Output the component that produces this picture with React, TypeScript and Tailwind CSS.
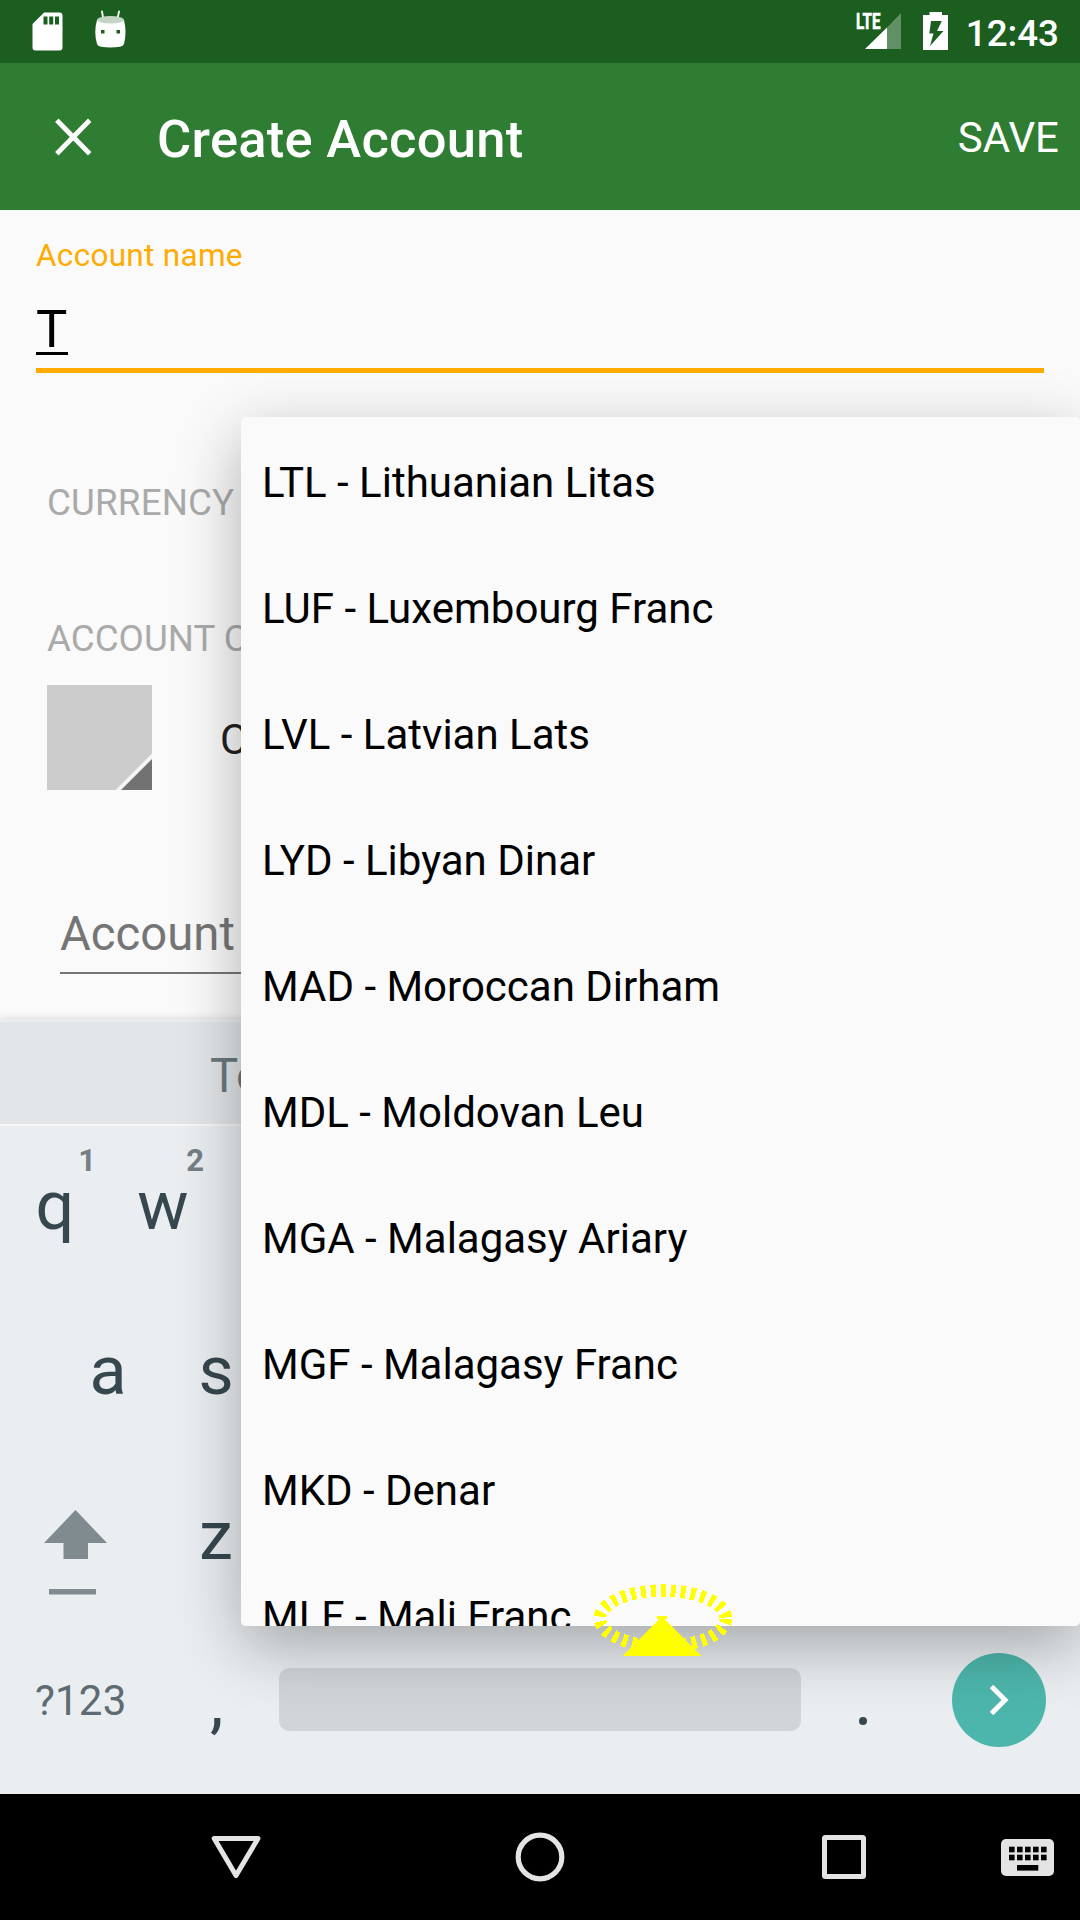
import React from "react";

const currencies = [
  "LTL - Lithuanian Litas",
  "LUF - Luxembourg Franc",
  "LVL - Latvian Lats",
  "LYD - Libyan Dinar",
  "MAD - Moroccan Dirham",
  "MDL - Moldovan Leu",
  "MGA - Malagasy Ariary",
  "MGF - Malagasy Franc",
  "MKD - Denar",
  "MLF - Mali Franc",
];

function StatusBar() {
  return (
    <div className="flex h-[63px] shrink-0 items-start bg-[#1b5e20] text-white">
      <svg className="ml-8 mt-3 h-[39px] w-[31px]" viewBox="0 0 31 39">
        <path
          fillRule="evenodd"
          fill="#fff"
          d="M12 0.500H27.500Q30.500 0.500 30.500 3.500V35.500Q30.500 38.500 27.500 38.500H3.500Q0.500 38.500 0.500 35.500V12ZM11.500 4.500V12.500H15.500V4.500ZM17.200 4.500V12.500H21.200V4.500ZM23 4.500V12.500H27V4.500Z"
        />
      </svg>
      <svg className="ml-8 mt-[10px] h-[39px] w-[31px]" viewBox="0 0 31 39">
        <path d="M7 1.500L8.300 9M24 1.500L22.500 9" stroke="#fff" strokeWidth="1.800" strokeLinecap="round" />
        <path
          fill="#fff"
          fillRule="evenodd"
          d="M2 10Q15.500 16 29 10Q32 22 29 34Q28.500 36 25 36.800Q15.500 38.200 6 36.800Q2.700 36 2 34Q-1.500 22 2 10ZM6 20V23.500H9.500V20ZM21.500 20V23.500H25V20Z"
        />
        <ellipse cx="15.500" cy="9.800" rx="13.500" ry="3.700" fill="#c3d5c4" />
      </svg>
      <svg className="ml-auto mt-3 h-[38px] w-[46px]" viewBox="0 0 46 38">
        <path d="M45 1V37H31V15.500Z" fill="#619064" />
        <path d="M31 15.500V37H9Z" fill="#fff" />
        <text
          x="0"
          y="17"
          textLength="24.500"
          lengthAdjust="spacingAndGlyphs"
          fill="#fff"
          stroke="#fff"
          strokeWidth="0.600"
          className="font-['Roboto',sans-serif] text-[22px] font-bold"
        >
          LTE
        </text>
      </svg>
      <svg className="ml-[21px] mt-3 h-[38px] w-[25px]" viewBox="0 0 25 38">
        <path
          fill="#fff"
          fillRule="evenodd"
          d="M6.500 0H19V3H25V38H0V3H6.500ZM8 9L6.300 21.500H10.500L7 34L20.500 19H14L18.800 9Z"
        />
      </svg>
      <span className="ml-[18px] mr-[21px] mt-[12px] text-[36.750px] font-medium leading-[44px]">12:43</span>
    </div>
  );
}

function Toolbar() {
  return (
    <div className="flex h-[147px] shrink-0 items-center bg-[#2e7d32] text-white">
      <svg className="ml-[54px] h-[38px] w-[38px]" viewBox="0 0 38 38">
        <path d="M2.800 2.300L35.700 35.700M35.700 2.300L2.800 35.700" stroke="#fff" strokeWidth="4.800" />
      </svg>
      <span className="ml-[65px] mt-[4px] text-[52.500px] font-medium leading-[60px] tracking-[0.270px]">
        Create Account
      </span>
      <span className="ml-auto mr-[21px] mt-[3px] text-[42px] leading-[50px]">SAVE</span>
    </div>
  );
}

function AccountForm() {
  return (
    <div className="h-[809px] shrink-0 overflow-hidden bg-[#fafafa] pt-[28px]">
      <div className="mx-9 border-b-[5px] border-[#ffab00]">
        <div className="text-[31.500px] leading-[36px] tracking-[0.300px] text-[#ffab00]">Account name</div>
        <div className="mt-[25px] h-[69px]">
          <div className="h-[56px] w-[32px] border-b-[3px] border-black text-[52.500px] leading-[60px] text-black">T</div>
        </div>
      </div>
      <div className="ml-[47px] mt-[108px] text-[36.750px] leading-[44px] tracking-[0.150px] text-[#aaaaaa]">
        CURRENCY
      </div>
      <div className="ml-[47px] mt-[92px] w-[195px] overflow-hidden whitespace-nowrap text-[36.750px] leading-[44px] text-[#aaaaaa]">
        ACCOUNT C
      </div>
      <div className="ml-[47px] mt-[24px] flex h-[105px] items-center">
        <svg className="h-[105px] w-[105px]" viewBox="0 0 105 105">
          <rect width="105" height="105" fill="#cccccc" />
          <path d="M105 68.500V105H68.500Z" fill="#f5f5f5" />
          <path d="M105 74V105H74Z" fill="#727272" />
        </svg>
        <span className="ml-[68px] mt-[4px] w-[22px] overflow-hidden text-[42px] leading-[50px] text-[#212121]">C</span>
      </div>
      <div className="ml-[60px] mr-9 mt-[116px] border-b-2 border-[#757575] pb-[10px] text-[47.250px] leading-[56px] text-[#757575]">
        Account
      </div>
    </div>
  );
}

function Key({ label, hint }: { label: string; hint?: string }) {
  return (
    <div className="relative w-[108px] text-center text-[68.250px] leading-[80px]">
      {label}
      {hint && (
        <span className="absolute right-[13px] top-[-23px] text-[31px] font-bold leading-[36px] text-[#747f85]">
          {hint}
        </span>
      )}
    </div>
  );
}

function Keyboard() {
  return (
    <div className="relative flex h-[775px] shrink-0 flex-col bg-[#eaeef1] text-[#37474f] shadow-[0_-2px_6px_rgba(0,0,0,0.1)]">
      <div className="h-[107px] shrink-0 border-b-2 border-t-[3px] border-b-[#f5f7f8] border-t-[#ebeef0] bg-[#e2e6e9] pl-[210px] pt-[22px] text-[47.250px] leading-[64px] text-[#6b787e]">
        <div className="w-[31px] overflow-hidden">To</div>
      </div>
      <div className="mt-[40px] flex h-[165px] pl-px">
        <Key label="q" hint="1" />
        <Key label="w" hint="2" />
      </div>
      <div className="flex h-[165px] pl-[54px]">
        <Key label="a" />
        <Key label="s" />
      </div>
      <div className="flex h-[146px] items-start">
        <svg className="ml-[44px] mt-[14px] h-[85px] w-[64px]" viewBox="0 0 64 85">
          <path d="M31.500 0L63 33H44V49H19.500V33H0Z" fill="#808b90" />
          <path d="M5 79H52V84.500H5Z" fill="#808b90" />
        </svg>
        <div className="ml-[54px]">
          <Key label="z" />
        </div>
      </div>
      <div className="flex items-start">
        <span className="ml-[35px] mt-[34px] w-[92px] text-[42px] leading-[50px] tracking-[0.200px] text-[#5d6b72]">
          ?123
        </span>
        <span className="ml-[36px] mt-[20px] w-[106px] pl-[47px] text-[68.250px] leading-[80px]">,</span>
        <span className="ml-[10px] mt-[26px] h-[63px] w-[522px] rounded-[10px] bg-[#d0d5d8]" />
        <span className="ml-[58px] mt-[75px] h-2 w-2 rounded-full bg-[#37474f]" />
        <span className="ml-[85px] mt-[11px] flex h-[94px] w-[94px] items-center justify-center rounded-full bg-[#4db6ac]">
          <svg className="h-[32px] w-[20px]" viewBox="0 0 20 32">
            <path d="M2.500 2.500L16 16L2.500 29.500" fill="none" stroke="#fff" strokeWidth="5" />
          </svg>
        </span>
      </div>
    </div>
  );
}

function NavigationBar() {
  return (
    <div className="flex h-[126px] shrink-0 items-center bg-black">
      <svg className="ml-[211px] h-[50px] w-[50px]" viewBox="0 0 50 50">
        <path d="M3.200 6.500H47L25 43.500Z" fill="none" stroke="#e4e4e4" strokeWidth="5" strokeLinejoin="round" />
      </svg>
      <svg className="ml-[254px] h-[50px] w-[50px]" viewBox="0 0 50 50">
        <circle cx="25" cy="25" r="21.800" fill="none" stroke="#e4e4e4" strokeWidth="5.200" />
      </svg>
      <svg className="ml-[257px] h-[44px] w-[44px]" viewBox="0 0 44 44">
        <rect x="2.500" y="2.500" width="39" height="39" rx="1" fill="none" stroke="#e4e4e4" strokeWidth="5" />
      </svg>
      <svg className="ml-[135px] mt-px h-[37px] w-[53px]" viewBox="0 0 53 37">
        <rect width="53" height="37" rx="5" fill="#e4e4e4" />
        {[8, 16, 24, 32, 40].map((x) => (
          <React.Fragment key={x}>
            <rect x={x} y="7.700" width="5.600" height="5.600" />
            <rect x={x} y="15.700" width="5.600" height="5.600" />
          </React.Fragment>
        ))}
        <rect x="16" y="26" width="21.300" height="5.600" />
      </svg>
    </div>
  );
}

function CurrencyMenu() {
  return (
    <div className="absolute left-[241px] top-[417px] h-[1209px] w-[839px] rounded-[5px] shadow-[0_20px_64px_rgba(0,0,0,0.3)]">
      <ul className="h-full overflow-hidden rounded-[5px] bg-[#fafafa] pt-[3px]">
        {currencies.map((name) => (
          <li key={name} className="flex h-[126px] items-center pl-[21px] text-[42px] leading-[50px] text-black">
            {name}
          </li>
        ))}
      </ul>
    </div>
  );
}

function TouchMarker() {
  return (
    <svg
      className="absolute left-[590px] top-[1580px] h-[80px] w-[145px]"
      viewBox="590 1580 145 80"
      shapeRendering="crispEdges"
    >
      <ellipse
        cx="662.800"
        cy="1618.500"
        rx="63"
        ry="28"
        fill="none"
        stroke="#ffff00"
        strokeWidth="12.500"
        strokeDasharray="5 5"
      />
      <path d="M657 1616H667V1619H665L701 1656H623L659.500 1619H657Z" fill="#ffff00" />
    </svg>
  );
}

export default function App() {
  return (
    <div className="relative flex h-[1920px] w-[1080px] flex-col overflow-hidden bg-[#fafafa] font-['Roboto',sans-serif]">
      <StatusBar />
      <Toolbar />
      <AccountForm />
      <Keyboard />
      <NavigationBar />
      <CurrencyMenu />
      <TouchMarker />
    </div>
  );
}
